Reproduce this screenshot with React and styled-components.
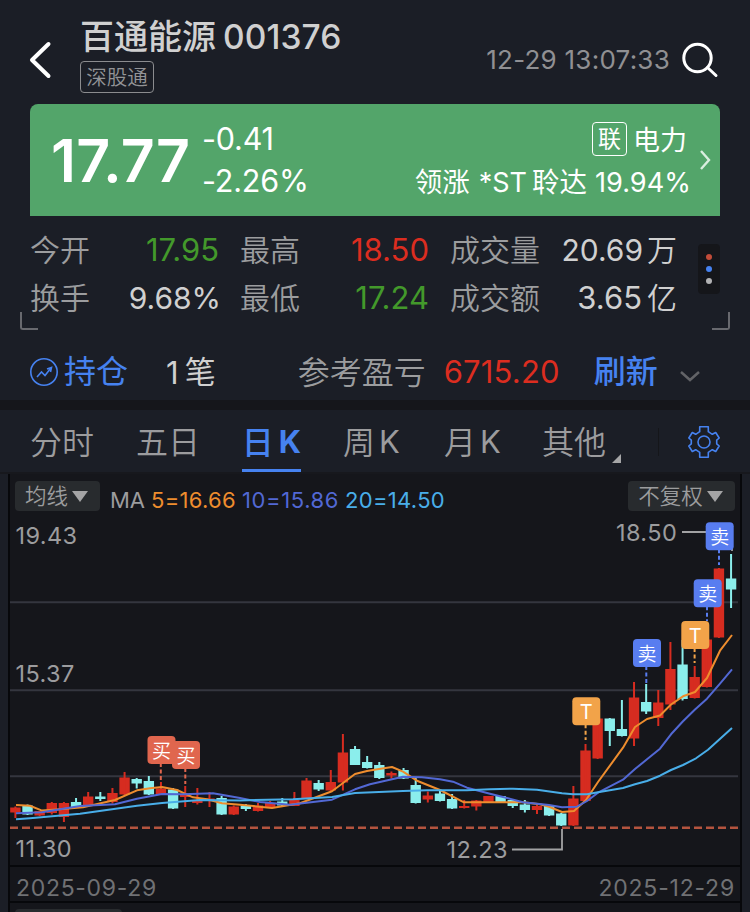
import React from 'react';
import styled, { createGlobalStyle } from 'styled-components';

const GlobalStyle = createGlobalStyle`
  * { box-sizing: border-box; }
  body {
    margin: 0;
    background: #1b1e26;
    font-family: Inter, "Noto Sans CJK SC", sans-serif;
    font-weight: 400;
  }
`;

const Page = styled.div`
  width: 750px;
  height: 912px;
  overflow: hidden;
  display: flex;
  flex-direction: column;
  background: #1b1e26;
  color: #9c9c9e;
  white-space: nowrap;
`;

const Txt = styled.span`
  font-size: ${p => p.$size || 30}px;
  line-height: 1;
  color: ${p => p.$color || 'inherit'};
  font-weight: ${p => p.$weight || 400};
  letter-spacing: ${p => p.$ls || 0}px;
  margin-left: ${p => p.$ml || 0}px;
  padding-top: ${p => p.$pt || 0}px;
  padding-bottom: ${p => p.$pb || 0}px;
`;

// lighter cut of the CJK family for labels
const Han = styled(Txt)`
  font-family: "Noto Sans CJK SC", sans-serif;
  font-weight: ${p => p.$weight || 350};
`;

const Header = styled.header`
  height: 104px;
  padding: 0 31px 0 29px;
  display: flex;
`;

const BackIcon = styled.svg`
  width: 24px;
  height: 40px;
  margin-top: 40px;
`;

const TitleBlock = styled.div`
  margin-left: 27px;
  padding-top: 15px;
  flex: 1;
`;

const Title = styled.div`
  height: 46px;
  padding-bottom: 2px;
  color: #d0d0d0;
  display: flex;
  align-items: center;
`;

const MarketTag = styled.div`
  width: 74px;
  height: 32px;
  border: 1px solid #8b8c8f;
  border-radius: 4px;
  font-size: 20.5px;
  font-weight: 350;
  line-height: 31px;
  text-align: center;
  color: #939497;
`;

const Clock = styled.div`
  margin-top: 44px;
  height: 32px;
  line-height: 32px;
  font-size: 26px;
  letter-spacing: 0.25px;
  color: #909093;
`;

const SearchIcon = styled.svg`
  width: 38px;
  height: 38px;
  margin: 41px 0 0 11px;
`;

const QuoteCard = styled.section`
  margin: 0 30px;
  height: 112px;
  padding: 0 8px 0 21px;
  border-radius: 8px 8px 0 0;
  background: #53a56a;
  color: #fff;
  display: flex;
  align-items: center;
`;

const Price = styled.div`
  width: 151px;
  padding-top: 1px;
  font-size: 59px;
  font-weight: 600;
  line-height: 112px;
  letter-spacing: 0.2px;
`;

const Change = styled.div`
  flex: 1;
  font-size: 30.5px;
  letter-spacing: -0.2px;
  line-height: 42px;
  margin-top: -1px;
`;

const Sector = styled.div`
  display: flex;
  flex-direction: column;
  align-items: flex-end;
  margin-top: -2px;
`;

const SectorRow = styled.div`
  height: 42px;
  display: flex;
  align-items: center;
  font-size: 27px;
  padding-right: ${p => p.$pr || 0}px;
`;

const LinkBox = styled.span`
  width: 35px;
  height: 34px;
  margin: 2px 6px 0 0;
  border: 1px solid #fff;
  border-radius: 4px;
  font-size: 23px;
  line-height: 33px;
  text-align: center;
`;

const CardArrow = styled.svg`
  width: 14px;
  height: 24px;
  margin-left: 7px;
`;

const Stats = styled.section`
  height: 120px;
  padding: 10px 20px 0 20px;
  display: flex;
  justify-content: space-between;
`;

const StatGrid = styled.div`
  display: grid;
  grid-template-columns: 60px 129px 81px 129px 112px 136px;
  grid-template-rows: 48px 48px;
  margin-left: 10px;
  align-items: center;
`;

const StatLabel = styled.div`
  font-size: 30px;
  font-weight: 350;
  color: #9c9d9f;
  line-height: 48px;
  padding-left: ${p => (p.$first ? 0 : 21)}px;
`;

const StatValue = styled.div`
  font-size: ${p => p.$size || 31}px;
  line-height: 48px;
  text-align: right;
  margin-right: ${p => p.$mr || 0}px;
  color: ${p => p.$color || '#d0d0d0'};
`;

const MoreDots = styled.div`
  width: 22px;
  height: 50px;
  margin: 18px 10px 0 0;
  border-radius: 4px;
  background: #15161a;
  display: flex;
  flex-direction: column;
  align-items: center;
  justify-content: center;
  gap: 6px;
`;

const Dot = styled.i`
  width: 6px;
  height: 6px;
  border-radius: 50%;
  background: ${p => p.$color};
`;

const Corners = styled.div`
  margin: -24px 20px 0;
  display: flex;
  justify-content: space-between;
`;

const Corner = styled.i`
  width: 18px;
  height: 18px;
  border-bottom: 2px solid #68696e;
  border-left: ${p => (p.$left ? '2px solid #68696e' : 0)};
  border-right: ${p => (p.$left ? 0 : '2px solid #68696e')};
  border-radius: ${p => (p.$left ? '0 0 0 3px' : '0 0 3px 0')};
`;

const PositionRow = styled.section`
  height: 70px;
  padding: 14px 0 0 29px;
  display: flex;
  align-items: center;
`;

const FoldIcon = styled.svg`
  width: 24px;
  height: 16px;
  margin: 7px 0 0 20px;
`;

const Band = styled.div`
  height: 10px;
  background: #15161b;
`;

const Tabs = styled.nav`
  height: 64px;
  display: flex;
  padding-left: 30px;
  border-bottom: 2px solid #17181d;
`;

const Tab = styled.div`
  height: 62px;
  width: ${p => p.$w}px;
  margin-right: ${p => p.$gap}px;
  padding-top: 1px;
  display: flex;
  align-items: center;
  justify-content: center;
  gap: 7px;
  color: ${p => (p.$active ? '#4682f0' : '#9c9c9e')};
  border-bottom: ${p => (p.$active ? '3px solid #4682f0' : '3px solid transparent')};
`;

const Corner3 = styled.i`
  align-self: flex-start;
  margin-top: 44px;
  border-left: 9px solid transparent;
  border-bottom: 9px solid #a6a6a7;
`;

const TabDivider = styled.i`
  width: 1px;
  height: 28px;
  margin: 18px 0 0 37px;
  background: #15161a;
`;

const Gear = styled.svg`
  width: 34px;
  height: 34px;
  margin: 15px 0 0 28px;
`;

const ChartPanel = styled.section`
  width: 734px;
  height: 438px;
  margin-left: 8px;
  border-left: 2px solid #07080b;
  border-right: 2px solid #07080b;
  background: #15161b;
`;

const ChartBar = styled.div`
  height: 44px;
  padding: 0 5px;
  display: flex;
  align-items: center;
`;

const Pick = styled.div`
  width: ${p => p.$w}px;
  height: 30px;
  padding-right: 2px;
  border-radius: 4px;
  background: #282b2e;
  color: #9c9d9e;
  font-size: 21.5px;
  font-weight: 350;
  line-height: 30px;
  display: flex;
  align-items: center;
  justify-content: center;
  gap: 4px;

  &::after {
    content: '';
    border: 8px solid transparent;
    border-top: 11px solid #a4a4a5;
    border-bottom: 0;
  }
`;

const Legend = styled.div`
  flex: 1;
  display: flex;
  padding: 7px 0 0 10px;
`;

const Plot = styled.svg`
  display: block;
  font-family: Inter, "Noto Sans CJK SC", sans-serif;
`;

const Footer = styled.div`
  height: 38px;
  padding: 8px 5px 0 6px;
  margin-top: -2px;
  border-top: 2px solid #07080b;
  border-bottom: 2px solid #07080b;
  display: flex;
  justify-content: space-between;
  align-items: center;
  color: #707174;
`;

const NextPick = styled.div`
  width: 107px;
  height: 12px;
  margin: 6px 0 0 5px;
  border-radius: 4px;
  background: #282b2e;
`;

const UP = '#d62c20';
const DOWN = '#8beeec';

// [up, body top, body bottom, high, low]
const candles = [
  [1, 807.5, 812.5, 806.5, 818], [0, 805.5, 814.5, 804.5, 815], [1, 811, 815.5, 811, 816],
  [1, 803, 813, 802, 814.5], [1, 803, 817, 802, 822], [0, 802, 807, 798, 807],
  [1, 796.5, 805, 792, 805], [0, 796.5, 799, 792, 801], [1, 793, 802, 788, 803.5],
  [1, 777.5, 794.5, 772, 795], [0, 779, 783.5, 778, 788.5], [0, 781, 794.5, 776, 795],
  [1, 788.5, 794, 782, 794], [0, 789.5, 808.5, 788, 809], [1, 795, 797, 786, 807],
  [1, 800, 803, 788, 804.5], [1, 798.5, 800, 792, 807], [0, 798, 814.5, 796, 815],
  [1, 806.5, 814.5, 805.5, 815], [0, 805.5, 809, 804, 811], [1, 805.5, 811, 803, 811.5],
  [1, 803, 807.5, 801, 808], [0, 801.5, 805.5, 798, 806], [1, 800, 806, 792, 806],
  [1, 780.5, 798, 778, 798], [0, 783, 789.5, 780, 791], [1, 782, 790.5, 770, 791],
  [1, 752.5, 782.5, 734, 790.5], [0, 749, 765, 746, 765], [0, 762, 768, 756, 768.5],
  [0, 765, 778, 762, 779], [1, 773, 775.5, 771.5, 778.5], [0, 770, 778.5, 768, 779],
  [0, 785, 803, 778, 803.5], [1, 795.5, 799.5, 791.5, 802.5], [0, 793.5, 801, 790.5, 801.5],
  [0, 799, 808.5, 794, 809], [1, 806, 808, 800, 808.5], [1, 800.5, 806.5, 800, 810.5],
  [1, 796, 802, 796, 803], [0, 796, 802, 796, 802], [0, 800, 806, 799, 808],
  [0, 804.5, 810, 800, 812.5], [1, 806, 810, 804, 814], [0, 806, 815.5, 806, 816],
  [0, 813.5, 825.5, 813, 826], [1, 798.5, 825.5, 786, 826], [1, 750.5, 801, 744, 801.5],
  [1, 718.5, 758.5, 718, 759], [0, 718.5, 731, 718, 746], [0, 729, 736, 700, 736.5],
  [1, 697.5, 738.5, 682, 746], [0, 702, 711.5, 684, 714], [1, 702.5, 718, 690, 726],
  [1, 669, 704.5, 642, 710], [0, 664.5, 699, 640, 700.5], [1, 677, 698, 666, 698.5],
  [1, 639.5, 687, 639, 687.5], [1, 568.5, 637.5, 568, 638], [0, 578.5, 589.5, 554, 608],
];

const averages = [
  ['#ee8d2e', '16,805 30,805.7 42,810.6 60,809.3 83,807.3 115,800 137,790.3 150,788.3 162,787 177,790 193,797.3 207,799.3 222,803.3 240,804.7 272,808 300,803.3 332,791.3 355,774 367,771 379,769 392,767 403,771.7 417,780.7 440,790 464,802.3 523,802.3 540,804.3 549,806.7 562,812 574,811 586,800 598,782 623,747.7 635,727 647,719 660,715.5 671,704.5 683,696.3 695,692 707,678 720,650.7 732,635'],
  ['#5268d4', '16,813.3 42,812.3 80,806 115,804.3 137,798.7 162,794 183,794.3 213,793.3 233,796.7 240,798 260,802 290,804.7 332,799.7 355,789.3 370,784.3 403,776.7 422,777.3 440,779.3 453,781.7 467,787.7 490,793.7 502,796.7 523,802.3 549,805 562,807.3 577,806.7 587,801 598,792.7 623,779.7 635,769 647,759.3 660,748.7 671,734.3 683,721.3 695,709.5 707,698.7 720,683.7 732,669.3'],
  ['#49aee9', '16,819.3 30,818.3 80,813.7 137,805.7 162,803 200,800 240,800.4 293,799.3 332,797 355,793 403,791 427,790.3 467,790.3 490,789.3 513,788.7 537,789.7 562,793.3 573,794.3 587,794.3 598,792.3 623,788 635,784.3 647,781 660,775.7 671,770 683,765 696,758.3 708,749.7 732,728'],
];

const markers = [
  ['买', 161.5, 736, '#e0664e', 782], ['买', 186, 741, '#e0664e', 786],
  ['T', 586.3, 697.3, '#f2a349', 742], ['卖', 647, 639, '#587df0', 685],
  ['卖', 707.7, 579.3, '#587df0', 623], ['T', 695.3, 621, '#f2a349', 665],
  ['卖', 719.7, 522.3, '#587df0', 567],
];

const priceLabels = [
  ['19.43', 15.5, 543.5], ['15.37', 15.5, 681.5], ['11.30', 15.5, 856.5],
  ['18.50', 616, 540.5], ['12.23', 446.5, 858],
];

const KLine = () => (
  <Plot width="730" height="349" viewBox="10 518 730 349">
    {[602.3, 690.2, 776.3].map(y => (
      <path key={y} d={`M10 ${y}H738`} stroke="#34363f" strokeWidth="2" />
    ))}
    <path d="M10 827.7H738" stroke="#b4543f" strokeWidth="2.4" strokeDasharray="8 4" />
    {candles.map(([up, top, bottom, high, low], i) => {
      const x = 15.4 + i * 12.13;
      return (
        <g key={i} fill={up ? UP : DOWN}>
          <rect x={x - 5.2} y={top} width="10.4" height={bottom - top} />
          <rect x={x - 1} y={high} width="2" height={low - high} />
        </g>
      );
    })}
    {averages.map(([color, points]) => (
      <polyline key={color} points={points} fill="none" stroke={color} strokeWidth="2" strokeLinejoin="round" />
    ))}
    <path d="M682 532H706M512 849.5H562V829M732 545V551" fill="none" stroke="#a2a2a4" strokeWidth="1.8" />
    {markers.map(([text, x, y, color, end]) => (
      <g key={x}>
        <path d={`M${x - 0.7} ${y + 27}V${end - 2}`} stroke={color} strokeWidth="2" strokeDasharray="4 2.5" />
        <rect x={x - 14} y={y} width="28" height="28" rx="4" fill={color} />
        <text x={x} y={y + 21.6} fill="#fff" fontSize={text === 'T' ? 20 : 19} fontWeight={text === 'T' ? 400 : 350} textAnchor="middle">{text}</text>
      </g>
    ))}
    {priceLabels.map(([text, x, y]) => (
      <text key={text} x={x} y={y} fill="#9c9c9e" fontSize="23.5" letterSpacing="0.4">{text}</text>
    ))}
  </Plot>
);

const App = () => (
  <>
    <GlobalStyle />
    <Page>
      <Header>
        <BackIcon viewBox="0 0 24 40" fill="none" stroke="#fff" strokeWidth="4" strokeLinecap="round" strokeLinejoin="round">
          <path d="M19.5 4L3 20L19.5 36" />
        </BackIcon>
        <TitleBlock>
          <Title>
            <Txt $size={34} $weight={500}>百通能源</Txt>
            <Txt $size={33.5} $weight={500} $ml={7} $ls={0.1} $pt={2}>001376</Txt>
          </Title>
          <MarketTag>深股通</MarketTag>
        </TitleBlock>
        <Clock>12-29 13:07:33</Clock>
        <SearchIcon viewBox="0 0 38 38" fill="none" stroke="#fff" strokeWidth="3" strokeLinecap="round">
          <circle cx="16.5" cy="17" r="13.7" />
          <path d="M26.5 26.5L35 34.5" />
        </SearchIcon>
      </Header>

      <QuoteCard>
        <Price>17.77</Price>
        <Change>
          <div>-0.41</div>
          <div>-2.26%</div>
        </Change>
        <Sector>
          <SectorRow $pr={4}>
            <LinkBox>联</LinkBox>
            电力
          </SectorRow>
          <SectorRow>
            <Txt $size={27.5} $pt={5}>领涨</Txt>
            <Txt $size={27} $ml={9} $pt={5}>*ST</Txt>
            <Txt $size={27.5} $ml={5} $pt={5}>聆达</Txt>
            <Txt $size={27.2} $ml={8} $pt={5}>19.94%</Txt>
          </SectorRow>
        </Sector>
        <CardArrow viewBox="0 0 14 24" fill="none" stroke="#d9eedf" strokeWidth="2.4">
          <path d="M3 3L11 12L3 21" />
        </CardArrow>
      </QuoteCard>

      <Stats>
        <StatGrid>
          <StatLabel $first>今开</StatLabel>
          <StatValue $color="#43992b">17.95</StatValue>
          <StatLabel>最高</StatLabel>
          <StatValue $color="#dc2d20">18.50</StatValue>
          <StatLabel>成交量</StatLabel>
          <StatValue $size={30}>20.69<Han $ml={4} $weight={350}>万</Han></StatValue>
          <StatLabel $first>换手</StatLabel>
          <StatValue $size={30} $mr={-2}>9.68%</StatValue>
          <StatLabel>最低</StatLabel>
          <StatValue $color="#43992b">17.24</StatValue>
          <StatLabel>成交额</StatLabel>
          <StatValue $size={31}>3.65<Han $ml={5} $weight={350}>亿</Han></StatValue>
        </StatGrid>
        <MoreDots>
          <Dot $color="#c24c39" />
          <Dot $color="#4682f0" />
          <Dot $color="#b2b2b4" />
        </MoreDots>
      </Stats>
      <Corners>
        <Corner $left />
        <Corner />
      </Corners>

      <PositionRow>
        <svg width="30" height="30" viewBox="0 0 30 30" fill="none" stroke="#4682f0" strokeWidth="1.6">
          <circle cx="15" cy="15" r="13.2" />
          <path d="M8 20L12.5 15L16 18.500L21.500 11.500M18 12L22.500 10.500L21.500 15" />
        </svg>
        <Txt $size={32} $color="#4682f0" $ml={5}>持仓</Txt>
        <Txt $size={31} $color="#d0d0d0" $ml={38}>1</Txt>
        <Txt $size={31} $color="#d0d0d0" $ml={6} $pb={2}>笔</Txt>
        <Han $size={32} $color="#9c9d9f" $ml={82} $pb={4}>参考盈亏</Han>
        <Txt $size={31} $color="#dc2d20" $ml={18} $ls={0.2} $pb={1}>6715.20</Txt>
        <Txt $size={32} $color="#4682f0" $weight={500} $ml={34}>刷新</Txt>
        <FoldIcon viewBox="0 0 24 16" fill="none" stroke="#626367" strokeWidth="2.5">
          <path d="M3 4L12 12L21 4" />
        </FoldIcon>
      </PositionRow>
      <Band />

      <Tabs>
        <Tab $w={64} $gap={42}><Han $size={32}>分时</Han></Tab>
        <Tab $w={64} $gap={42}><Han $size={32}>五日</Han></Tab>
        <Tab $w={59} $gap={41} $active>
          <Han $size={32} $weight={500}>日</Han>
          <Txt $size={31} $weight={700} $ml={-2} $pt={3}>K</Txt>
        </Tab>
        <Tab $w={59} $gap={42}><Han $size={32}>周</Han><Txt $size={31} $ml={-3} $pt={3}>K</Txt></Tab>
        <Tab $w={59} $gap={40}><Han $size={32}>月</Han><Txt $size={31} $ml={-3} $pt={3}>K</Txt></Tab>
        <Tab $w={64} $gap={6}><Han $size={32}>其他</Han></Tab>
        <Corner3 />
        <TabDivider />
        <Gear viewBox="0 0 34 34" fill="none" stroke="#4682f0" strokeWidth="1.6" strokeLinejoin="round">
          <path d="M12.700 1.800H21.300V6.700L25.300 9.300L28.700 7.500L32.200 13L29.700 15.200V18.800L32.200 21L28.700 26.500L25.300 24.700L21.300 27.300V32.200H12.700V27.300L8.700 24.700L5.300 26.500L1.800 21L4.300 18.800V15.200L1.800 13L5.300 7.500L8.700 9.300L12.700 6.700Z" />
          <circle cx="17" cy="17" r="6" />
        </Gear>
      </Tabs>

      <ChartPanel>
        <ChartBar>
          <Pick $w={85}>均线</Pick>
          <Legend>
            <Txt $size={22}>MA</Txt>
            <Txt $size={22} $ml={6} $ls={0.3} $color="#ee8d2e">5=16.66</Txt>
            <Txt $size={22} $ml={6} $ls={0.6} $color="#5268d4">10=15.86</Txt>
            <Txt $size={22} $ml={6} $ls={0.3} $color="#49aee9">20=14.50</Txt>
          </Legend>
          <Pick $w={107}>不复权</Pick>
        </ChartBar>
        <KLine />
        <Footer>
          <Txt $size={23} $ls={0.7}>2025-09-29</Txt>
          <Txt $size={23} $ls={0.8}>2025-12-29</Txt>
        </Footer>
        <NextPick />
      </ChartPanel>
    </Page>
  </>
);

export default App;
